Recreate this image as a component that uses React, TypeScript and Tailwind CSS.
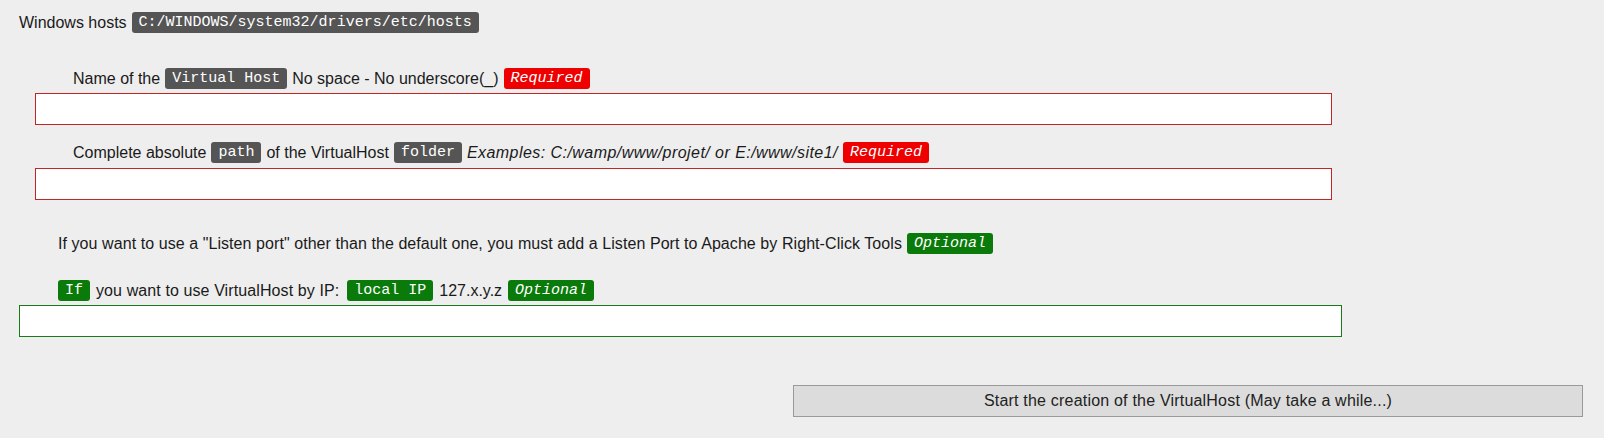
import React from "react";

const sans = { fontFamily: '"Liberation Sans", Arial, sans-serif' };

function Badge({ children, color, italic, className = "" }: { children: React.ReactNode; color: "gray" | "red" | "green"; italic?: boolean; className?: string }) {
  const bg = color === "gray" ? "bg-[#555555]" : color === "red" ? "bg-[#ee0000]" : "bg-[#0a7a0a]";
  return (
    <span
      className={`inline-flex h-[21px] items-center rounded-[3px] px-[7px] text-[15px] leading-none text-white ${bg} ${italic ? "italic" : ""} ${className}`}
      style={{ fontFamily: '"Liberation Mono", "DejaVu Sans Mono", monospace' }}
    >
      {children}
    </span>
  );
}

export default function App() {
  return (
    <div className="min-h-[438px] w-[1604px] bg-[#eeeeee] text-[16px] text-[#1a1a1a]" style={sans}>
      <div className="flex flex-col pt-[12px]">
        <div className="flex h-[21px] items-center gap-[5px] pl-[19px]">
          <span>Windows hosts</span>
          <Badge color="gray">C:/WINDOWS/system32/drivers/etc/hosts</Badge>
        </div>

        <div className="mt-[35px] flex h-[21px] items-center gap-[5px] pl-[73px]">
          <span>Name of the</span>
          <Badge color="gray">Virtual Host</Badge>
          <span>No space - No underscore(_)</span>
          <Badge color="red" italic>Required</Badge>
        </div>
        <input className="ml-[35px] mt-[4px] h-[32px] w-[1297px] border border-[#c02626] bg-white outline-none" />

        <div className="mt-[17px] flex h-[21px] items-center gap-[5px] pl-[73px]">
          <span>Complete absolute</span>
          <Badge color="gray">path</Badge>
          <span>of the VirtualHost</span>
          <Badge color="gray">folder</Badge>
          <span className="italic tracking-[0.45px]">Examples: C:/wamp/www/projet/ or E:/www/site1/</span>
          <Badge color="red" italic>Required</Badge>
        </div>
        <input className="ml-[35px] mt-[5px] h-[32px] w-[1297px] border border-[#c02626] bg-white outline-none" />

        <div className="mt-[33px] flex h-[21px] items-center gap-[5px] pl-[58px]">
          <span className="tracking-[0.07px]">If you want to use a "Listen port" other than the default one, you must add a Listen Port to Apache by Right-Click Tools</span>
          <Badge color="green" italic>Optional</Badge>
        </div>

        <div className="mt-[26px] flex h-[21px] items-center gap-[6px] pl-[58px]">
          <Badge color="green">If</Badge>
          <span className="tracking-[0.1px]">you want to use VirtualHost by IP:</span>
          <Badge color="green" className="ml-[2px]">local IP</Badge>
          <span>127.x.y.z</span>
          <Badge color="green" italic>Optional</Badge>
        </div>
        <input className="ml-[19px] mt-[4px] h-[32px] w-[1323px] border border-[#1a7a1a] bg-white outline-none" />

        <div className="mt-[48px] flex pl-[793px]">
          <button className="h-[32px] w-[790px] border border-[#9a9a9a] bg-[#dcdcdc] text-[16px] tracking-[0.2px] text-[#222222]" style={sans}>
            Start the creation of the VirtualHost (May take a while...)
          </button>
        </div>
      </div>
    </div>
  );
}
